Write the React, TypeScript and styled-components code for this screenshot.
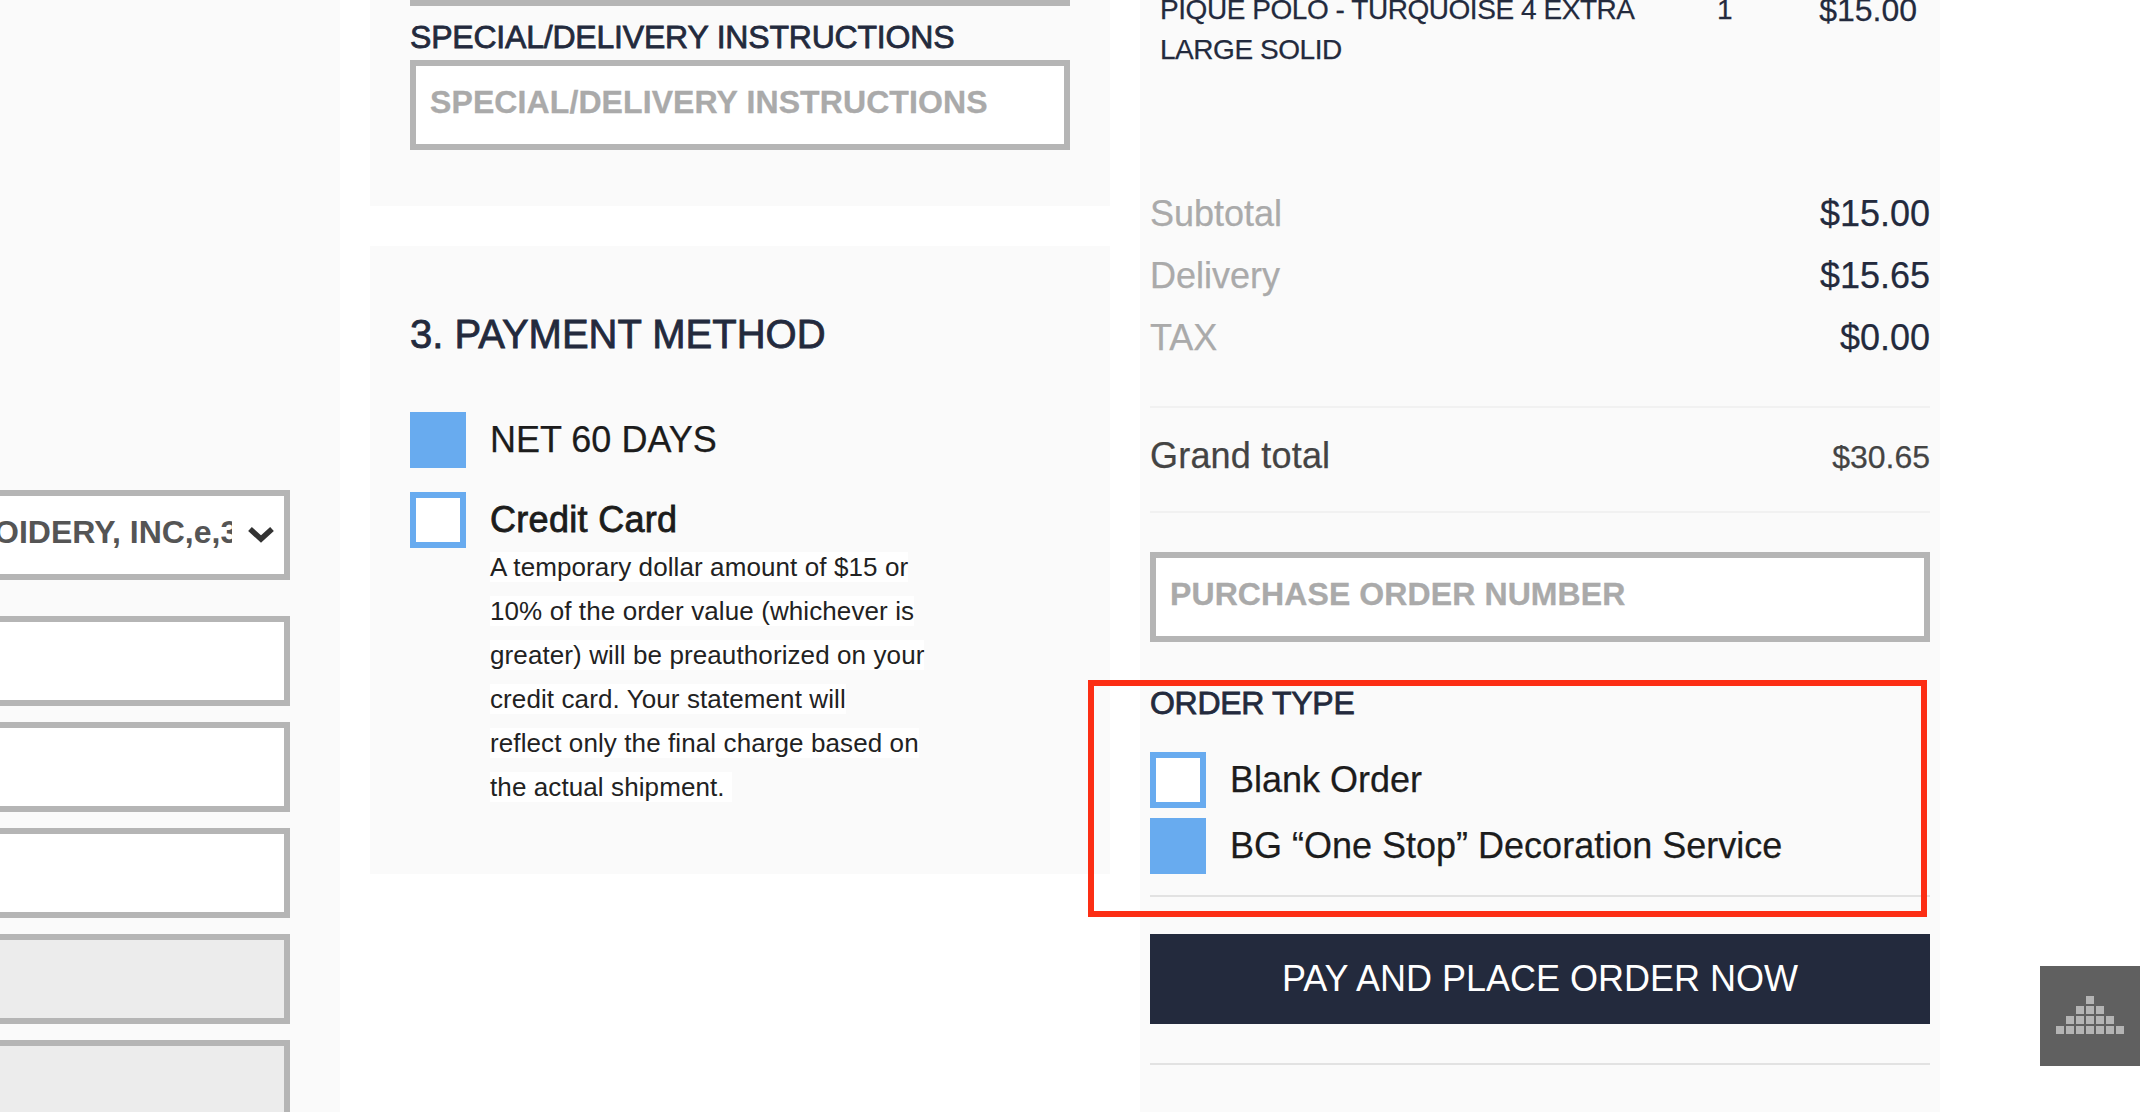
import React from "react";
import styled, { createGlobalStyle, css } from "styled-components";

const Global = createGlobalStyle`
  html, body { margin: 0; padding: 0; background: #fff; }
  body { font-family: "Liberation Sans", Arial, Helvetica, sans-serif; overflow: hidden; }
  * { box-sizing: border-box; }
`;

const NAVY = "#232a3d";
const GREY_BORDER = "#b5b5b5";
const BLUE = "#68abef";
const PANEL = "#fafafa";

const medium = css`
  -webkit-text-stroke: 0.8px currentColor;
`;

const soft = css`
  -webkit-text-stroke: 0.25px currentColor;
`;

const Page = styled.div`
  position: relative;
  width: 2154px;
  height: 1112px;
  overflow: hidden;
  display: flex;
  align-items: stretch;
  background: #fff;
`;

/* left column */
const LeftColumn = styled.div`
  width: 340px;
  flex: none;
  background: ${PANEL};
  padding: 490px 50px 0 0;
  display: flex;
  flex-direction: column;
  gap: 16px;
`;

const Field = styled.div<{ $disabled?: boolean }>`
  flex: none;
  height: 90px;
  border: 6px solid ${GREY_BORDER};
  border-left: none;
  background: ${(p) => (p.$disabled ? "#ececec" : "#fff")};
`;

const SelectField = styled(Field)`
  display: flex;
  align-items: center;
  justify-content: space-between;
  padding: 0 10px 0 0;
  margin-bottom: 20px;
`;

const SelectValue = styled.div`
  width: 232px;
  overflow: hidden;
  white-space: nowrap;
  font-size: 32px;
  font-weight: 700;
  color: #555;
  text-indent: -6px;
  padding-bottom: 6px;
`;

/* middle column */
const MiddleColumn = styled.div`
  width: 740px;
  flex: none;
  margin-left: 30px;
  display: flex;
  flex-direction: column;
`;

const Section = styled.section`
  background: ${PANEL};
  padding: 0 40px;
`;

const TopSection = styled(Section)`
  height: 206px;
`;

const PaymentSection = styled(Section)`
  height: 628px;
  margin-top: 40px;
  padding-top: 65px;
`;

const TopRule = styled.div`
  height: 6px;
  background: ${GREY_BORDER};
`;

const FieldLabel = styled.div`
  margin-top: 13px;
  height: 41px;
  font-size: 32px;
  line-height: 36px;
  color: ${NAVY};
  letter-spacing: -0.2px;
  ${medium}
`;

const TextInput = styled.div`
  height: 90px;
  border: 6px solid ${GREY_BORDER};
  background: #fff;
  padding: 0 14px 6px;
  display: flex;
  align-items: center;
  font-size: 32px;
  font-weight: 700;
  color: #aaa;
  letter-spacing: 0.1px;
  white-space: nowrap;
  -webkit-text-stroke: 0.3px currentColor;
`;

const Heading = styled.h2`
  margin: 0 0 55px;
  font-size: 40px;
  line-height: 46px;
  font-weight: 400;
  letter-spacing: 0;
  color: ${NAVY};
  ${medium}
`;

const OptionRow = styled.div<{ $gap?: number }>`
  display: flex;
  gap: 24px;
  margin-bottom: ${(p) => p.$gap ?? 0}px;
`;

const Check = styled.div<{ $on?: boolean }>`
  width: 56px;
  height: 56px;
  flex: none;
  border: 6px solid ${BLUE};
  background: ${(p) => (p.$on ? BLUE : "#fff")};
`;

const OptionLabel = styled.div<{ $medium?: boolean }>`
  font-size: 36px;
  line-height: 56px;
  color: #1c1c1c;
  white-space: nowrap;
  ${(p) => (p.$medium ? medium : soft)}
  letter-spacing: ${(p) => (p.$medium ? "0.3px" : "0")};
`;

const Description = styled.p`
  margin: -3px 0 0;
  font-size: 26px;
  line-height: 44px;
  letter-spacing: 0.1px;
  color: #222;
  white-space: nowrap;
`;

const Highlight = styled.span`
  background: #fff;
`;

/* right column */
const RightColumn = styled.div`
  width: 800px;
  flex: none;
  margin-left: 30px;
  padding: 0 10px;
  background: ${PANEL};
`;

const ItemRow = styled.div`
  margin-top: -10px;
  height: 193px;
  padding: 0 13px 0 10px;
  display: grid;
  grid-template-columns: 557px 1fr auto;
  font-size: 28px;
  line-height: 40px;
  letter-spacing: -0.45px;
  color: ${NAVY};
  ${soft}
`;

const ItemName = styled.div`
  width: 490px;
`;

const ItemPrice = styled.div`
  font-size: 32px;
  letter-spacing: 0;
`;

const TotalRow = styled.div<{ $grand?: boolean }>`
  display: flex;
  justify-content: space-between;
  align-items: baseline;
  font-size: 36px;
  line-height: 62px;
  color: ${(p) => (p.$grand ? "#444" : "#aaa")};
  letter-spacing: ${(p) => (p.$grand ? "0.2px" : "0")};
  ${soft}
`;

const TotalValue = styled.span<{ $grand?: boolean }>`
  color: ${(p) => (p.$grand ? "#444" : NAVY)};
  font-size: ${(p) => (p.$grand ? 32 : 36)}px;
  letter-spacing: 0;
`;

const Rule = styled.div<{ $top: number; $bottom: number; $strong?: boolean }>`
  height: 2px;
  margin: ${(p) => p.$top}px 0 ${(p) => p.$bottom}px;
  background: ${(p) => (p.$strong ? "#e2e2e2" : "#f1f1f1")};
`;

const OrderTitle = styled.div`
  margin: 43px 0 31px;
  font-size: 32px;
  line-height: 36px;
  letter-spacing: -0.3px;
  color: ${NAVY};
  ${medium}
`;

const OrderOptions = styled.div`
  display: flex;
  flex-direction: column;
  gap: 10px;
`;

const PayButton = styled.button`
  display: block;
  width: 100%;
  height: 90px;
  border: none;
  background: ${NAVY};
  color: #fff;
  font-family: inherit;
  font-size: 36px;
`;

const Annotation = styled.div`
  position: absolute;
  left: 1088px;
  top: 680px;
  width: 839px;
  height: 237px;
  border: 6px solid #fc2e14;
  pointer-events: none;
`;

const Widget = styled.div`
  position: absolute;
  left: 2040px;
  top: 966px;
  width: 100px;
  height: 100px;
  padding-bottom: 2px;
  background: #606060;
  display: flex;
  align-items: center;
  justify-content: center;
`;

const Chevron = () => (
  <svg width="26" height="20" viewBox="0 0 26 20" aria-hidden="true">
    <path d="M2 4 L13 14 L24 4" fill="none" stroke="#333" strokeWidth="5.5" />
  </svg>
);

const PyramidIcon = () => {
  const rows = [1, 3, 5, 7];
  return (
    <svg width="68" height="38" viewBox="0 0 68 38" aria-hidden="true">
      {rows.map((n, r) =>
        Array.from({ length: n }).map((_, i) => (
          <rect key={`${r}-${i}`} x={34 - 4 + (i - (n - 1) / 2) * 10} y={r * 10} width="8" height="8" fill="#b4b4b4" />
        ))
      )}
    </svg>
  );
};

export default function App() {
  return (
    <>
      <Global />
      <Page>
        <LeftColumn>
          <SelectField>
            <SelectValue>OIDERY, INC,e,3,Suite 100</SelectValue>
            <Chevron />
          </SelectField>
          <Field />
          <Field />
          <Field />
          <Field $disabled />
          <Field $disabled />
        </LeftColumn>

        <MiddleColumn>
          <TopSection>
            <TopRule />
            <FieldLabel>SPECIAL/DELIVERY INSTRUCTIONS</FieldLabel>
            <TextInput>SPECIAL/DELIVERY INSTRUCTIONS</TextInput>
          </TopSection>
          <PaymentSection>
            <Heading>3. PAYMENT METHOD</Heading>
            <OptionRow $gap={24}>
              <Check $on />
              <OptionLabel>NET 60 DAYS</OptionLabel>
            </OptionRow>
            <OptionRow>
              <Check />
              <div>
                <OptionLabel $medium>Credit Card</OptionLabel>
                <Description>
                  <Highlight>
                    A temporary dollar amount of $15 or
                    <br />
                    10% of the order value (whichever is
                    <br />
                    greater) will be preauthorized on your
                    <br />
                    credit card. Your statement will
                    <br />
                    reflect only the final charge based on
                    <br />
                    the actual shipment.&nbsp;
                  </Highlight>
                </Description>
              </div>
            </OptionRow>
          </PaymentSection>
        </MiddleColumn>

        <RightColumn>
          <ItemRow>
            <ItemName>PIQUE POLO - TURQUOISE 4 EXTRA LARGE SOLID</ItemName>
            <div>1</div>
            <ItemPrice>$15.00</ItemPrice>
          </ItemRow>
          <TotalRow>
            <span>Subtotal</span>
            <TotalValue>$15.00</TotalValue>
          </TotalRow>
          <TotalRow>
            <span>Delivery</span>
            <TotalValue>$15.65</TotalValue>
          </TotalRow>
          <TotalRow>
            <span>TAX</span>
            <TotalValue>$0.00</TotalValue>
          </TotalRow>
          <Rule $top={37} $bottom={17} />
          <TotalRow $grand>
            <span>Grand total</span>
            <TotalValue $grand>$30.65</TotalValue>
          </TotalRow>
          <Rule $top={23} $bottom={39} />
          <TextInput>PURCHASE ORDER NUMBER</TextInput>
          <OrderTitle>ORDER TYPE</OrderTitle>
          <OrderOptions>
            <OptionRow>
              <Check />
              <OptionLabel>Blank Order</OptionLabel>
            </OptionRow>
            <OptionRow>
              <Check $on />
              <OptionLabel>BG “One Stop” Decoration Service</OptionLabel>
            </OptionRow>
          </OrderOptions>
          <Rule $top={21} $bottom={37} $strong />
          <PayButton>PAY AND PLACE ORDER NOW</PayButton>
          <Rule $top={39} $bottom={0} $strong />
        </RightColumn>

        <Annotation />
        <Widget>
          <PyramidIcon />
        </Widget>
      </Page>
    </>
  );
}
